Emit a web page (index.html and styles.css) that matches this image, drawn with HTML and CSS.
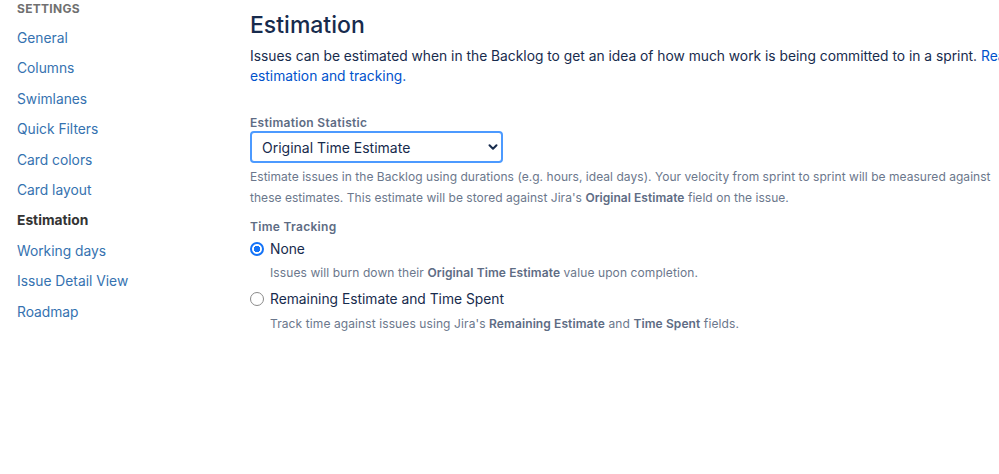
FILE: index.html
```html
<!DOCTYPE html>
<html lang="en">
<head>
    <meta charset="UTF-8">
    <meta name="viewport" content="width=device-width, initial-scale=1.0">
    <title>Board settings - Estimation</title>
    <link rel="stylesheet" href="styles.css">
</head>
<body>
    <div class="page">
        <nav class="sidebar">
            <h3 class="sidebar-title">Settings</h3>
            <ul class="nav-list">
                <li><a href="#">General</a></li>
                <li><a href="#">Columns</a></li>
                <li><a href="#">Swimlanes</a></li>
                <li><a href="#">Quick Filters</a></li>
                <li><a href="#">Card colors</a></li>
                <li><a href="#">Card layout</a></li>
                <li class="active">Estimation</li>
                <li><a href="#">Working days</a></li>
                <li><a href="#">Issue Detail View</a></li>
                <li><a href="#">Roadmap</a></li>
            </ul>
        </nav>
        <main class="content">
            <h1>Estimation</h1>
            <p class="intro">Issues can be estimated when in the Backlog to get an idea of how much work is being committed to in a sprint. <a href="#">Read about estimation and tracking.</a></p>

            <div class="field">
                <label class="field-label" for="statistic">Estimation Statistic</label>
                <div class="select-wrap">
                    <select id="statistic">
                        <option>Original Time Estimate</option>
                        <option>Story Points</option>
                        <option>Issue Count</option>
                    </select>
                    <svg class="chevron" width="12" height="12" viewBox="0 0 12 12"><path d="M2.5 4.2 6 7.7 9.5 4.2" fill="none" stroke="#172b4d" stroke-width="2" stroke-linecap="round" stroke-linejoin="round"/></svg>
                </div>
                <p class="help">Estimate issues in the Backlog using durations (e.g. hours, ideal days). Your velocity from sprint to sprint will be measured against these estimates. This estimate will be stored against Jira's <b>Original Estimate</b> field on the issue.</p>
            </div>

            <div class="field tracking">
                <div class="field-label">Time Tracking</div>
                <label class="radio">
                    <input type="radio" name="tracking" checked>
                    <span class="radio-mark"></span>
                    <span>None</span>
                </label>
                <p class="radio-help">Issues will burn down their <b>Original Time Estimate</b> value upon completion.</p>
                <label class="radio">
                    <input type="radio" name="tracking">
                    <span class="radio-mark"></span>
                    <span>Remaining Estimate and Time Spent</span>
                </label>
                <p class="radio-help">Track time against issues using Jira's <b>Remaining Estimate</b> and <b>Time Spent</b> fields.</p>
            </div>
        </main>
    </div>
</body>
</html>
```

FILE: styles.css
```css
html, body {
    margin: 0;
    padding: 0;
    overflow: hidden;
}
body {
    font-family: Inter, "Noto Sans", sans-serif;
    color: #172b4d;
    background: #fff;
}
.page {
    display: flex;
    width: 1100px;
}
.sidebar {
    width: 233px;
    padding: 0 0 0 17px;
    flex-shrink: 0;
}
.sidebar-title {
    margin: 2px 0 13px;
    font-size: 12px;
    font-weight: 700;
    letter-spacing: 0.3px;
    text-transform: uppercase;
    color: #707070;
    line-height: 14px;
}
.nav-list {
    list-style: none;
    margin: 0;
    padding: 0;
}
.nav-list li {
    font-size: 13.8px;
    line-height: 18px;
    margin-bottom: 12.4px;
}
.nav-list a {
    color: #3572b0;
    text-decoration: none;
}
.nav-list .active {
    font-weight: 700;
    color: #333;
}
.content {
    width: 850px;
}
h1 {
    margin: 10px 0 0;
    font-size: 23px;
    font-weight: 500;
    line-height: 30px;
}
.intro {
    margin: 6px 0 0;
    font-size: 13.8px;
    line-height: 20px;
}
.intro a {
    color: #0052cc;
    text-decoration: none;
}
.field {
    margin-top: 29px;
}
.field.tracking {
    margin-top: 11px;
}
.field-label {
    display: block;
    font-size: 12px;
    font-weight: 600;
    letter-spacing: 0.3px;
    color: #5e6c84;
    line-height: 16px;
}
.select-wrap {
    position: relative;
    width: 253px;
}
select {
    appearance: none;
    -webkit-appearance: none;
    display: block;
    width: 253px;
    height: 32px;
    padding: 0 30px 0 10px;
    border: 2px solid #4c9aff;
    border-radius: 4px;
    background: #fff;
    font-family: inherit;
    font-size: 14px;
    color: #172b4d;
}
.chevron {
    position: absolute;
    right: 4px;
    top: 10px;
    pointer-events: none;
}
.help {
    width: 760px;
    margin: 3px 0 0;
    font-size: 12px;
    letter-spacing: 0.04px;
    line-height: 21px;
    color: #6b778c;
}
.help b, .radio-help b {
    font-weight: 600;
    color: #5e6c84;
}
.radio {
    display: flex;
    align-items: center;
    gap: 6px;
    font-size: 13.8px;
    line-height: 20px;
    margin-top: 4px;
    cursor: pointer;
}
.radio input {
    display: none;
}
.radio-mark {
    width: 12px;
    height: 12px;
    border: 1px solid #8a8a8a;
    border-radius: 50%;
    box-sizing: content-box;
}
.radio input:checked + .radio-mark {
    width: 10px;
    height: 10px;
    border: 2px solid #1473f7;
    background: radial-gradient(circle, #1473f7 0 3px, #fff 3.5px);
}
.radio-help {
    margin: 6px 0 8px 20px;
    font-size: 12px;
    letter-spacing: 0.1px;
    line-height: 16px;
    color: #6b778c;
}
.radio-help + .radio {
    margin-top: 0;
}
.radio + .radio-help + .radio + .radio-help {
    margin-top: 7px;
}
```
